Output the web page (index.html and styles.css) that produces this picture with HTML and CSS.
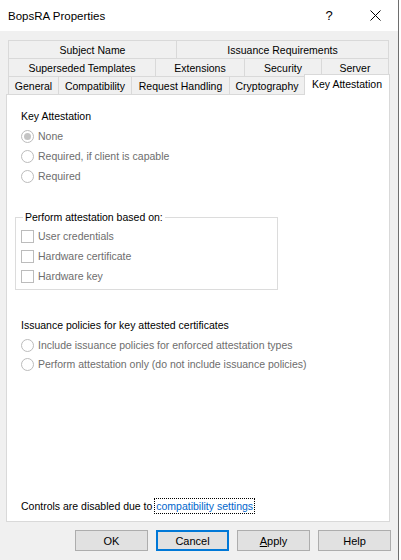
FILE: index.html
```html
<!DOCTYPE html>
<html>
<head>
<meta charset="utf-8">
<link rel="stylesheet" href="styles.css">
</head>
<body>
<div class="window">
  <div class="titlebar">
    <span class="title">BopsRA Properties</span>
    <span class="help">?</span>
    <svg class="close" width="11" height="11" viewBox="0 0 11 11"><path d="M0.5 0.5 L10.5 10.5 M10.5 0.5 L0.5 10.5" stroke="#000" stroke-width="1" fill="none"/></svg>
  </div>
  <div class="body">
    <div class="tabs">
      <div class="tabrow">
        <div class="tab w-subject">Subject Name</div>
        <div class="tab w-issuance last">Issuance Requirements</div>
      </div>
      <div class="tabrow">
        <div class="tab w-superseded">Superseded Templates</div>
        <div class="tab w-extensions">Extensions</div>
        <div class="tab w-security">Security</div>
        <div class="tab w-server last">Server</div>
      </div>
      <div class="tabrow">
        <div class="tab w-general">General</div>
        <div class="tab w-compat">Compatibility</div>
        <div class="tab w-request">Request Handling</div>
        <div class="tab w-crypto">Cryptography</div>
        <div class="tab selected w-key">Key Attestation</div>
      </div>
    </div>
    <div class="panel">
      <div class="section first">
        <div class="line label">Key Attestation</div>
        <div class="line option"><span class="radio checked"></span><span>None</span></div>
        <div class="line option"><span class="radio"></span><span>Required, if client is capable</span></div>
        <div class="line option"><span class="radio"></span><span>Required</span></div>
      </div>
      <fieldset class="group">
        <legend>Perform attestation based on:</legend>
        <div class="line option"><span class="check"></span><span>User credentials</span></div>
        <div class="line option"><span class="check"></span><span>Hardware certificate</span></div>
        <div class="line option"><span class="check"></span><span>Hardware key</span></div>
      </fieldset>
      <div class="section second">
        <div class="line label">Issuance policies for key attested certificates</div>
        <div class="line option"><span class="radio"></span><span>Include issuance policies for enforced attestation types</span></div>
        <div class="line option tight"><span class="radio"></span><span>Perform attestation only (do not include issuance policies)</span></div>
      </div>
      <div class="section footer">
        <div class="line label">Controls are disabled due to&nbsp;<a class="link">compatibility settings</a></div>
      </div>
    </div>
    <div class="buttons">
      <div class="btn">OK</div>
      <div class="btn default">Cancel</div>
      <div class="btn"><span class="ul">A</span>pply</div>
      <div class="btn">Help</div>
    </div>
  </div>
</div>
</body>
</html>
```
FILE: styles.css
```css
html, body {
  margin: 0;
  padding: 0;
  background: #ffffff;
}
body {
  width: 401px;
  height: 560px;
  overflow: hidden;
  font-family: "Liberation Sans", Arial, sans-serif;
  font-size: 10.5px;
  color: #000;
}
.window {
  width: 398px;
  height: 560px;
  border-right: 1px solid #6e6e6e;
  background: #f0f0f0;
  display: flex;
  flex-direction: column;
}
.titlebar {
  height: 31px;
  background: #ffffff;
  display: flex;
  align-items: center;
  flex-shrink: 0;
}
.title {
  margin-left: 8px;
  font-size: 11.5px;
  flex: 1;
  padding-top: 1px;
}
.help {
  font-size: 13px;
  width: 10px;
  text-align: center;
  margin-right: 36px;
}
.close {
  margin-right: 17px;
}
.body {
  padding: 9px 8px 0 7px;
  display: flex;
  flex-direction: column;
}
.tabs {
  display: flex;
  flex-direction: column;
  margin-left: 1px;
}
.tabrow {
  display: flex;
  height: 18px;
  align-items: flex-start;
}
.tab {
  box-sizing: border-box;
  height: 18px;
  border-top: 1px solid #d9d9d9;
  border-left: 1px solid #d9d9d9;
  display: flex;
  align-items: center;
  justify-content: center;
  white-space: nowrap;
  padding-top: 1px;
}
.tab.last {
  border-right: 1px solid #d9d9d9;
}
.w-subject { width: 168px; }
.w-issuance { width: 213px; }
.w-superseded { width: 147px; }
.w-extensions { width: 89px; }
.w-security { width: 77px; }
.w-server { width: 68px; }
.w-general { width: 50px; }
.w-compat { width: 73px; }
.w-request { width: 98px; }
.w-crypto { width: 75px; }
.tab.selected {
  width: 86px;
  height: 21px;
  margin-top: -2px;
  background: #ffffff;
  border-right: 1px solid #d9d9d9;
  position: relative;
  z-index: 1;
  align-items: flex-start;
  padding-top: 3px;
}
.panel {
  box-sizing: border-box;
  margin-left: -1px;
  height: 428px;
  background: #ffffff;
  border: 1px solid #d9d9d9;
  padding: 0 0 0 8px;
  display: flex;
  flex-direction: column;
}
.line {
  height: 20px;
  display: flex;
  align-items: center;
  white-space: nowrap;
}
.section {
  padding-left: 6px;
}
.section.first {
  margin-top: 11px;
}
.option {
  color: #6d6d6d;
}
.radio {
  box-sizing: border-box;
  width: 13px;
  height: 13px;
  border: 1px solid #bcbcbc;
  border-radius: 50%;
  background: #ffffff;
  margin-right: 4px;
  display: flex;
  align-items: center;
  justify-content: center;
  flex-shrink: 0;
}
.radio.checked::after {
  content: "";
  width: 7px;
  height: 7px;
  border-radius: 50%;
  background: #c4c4c4;
}
.check {
  box-sizing: border-box;
  width: 13px;
  height: 13px;
  border: 1px solid #bcbcbc;
  background: #ffffff;
  margin-right: 4px;
  flex-shrink: 0;
}
.group {
  margin: 24px 0 0 0;
  width: 263px;
  box-sizing: border-box;
  border: 1px solid #dcdcdc;
  padding: 2px 0 3px 5px;
  min-width: 0;
}
.group legend {
  padding: 0 2px;
  margin-left: 2px;
  line-height: 14px;
}
.section.second {
  margin-top: 25px;
}
.tight {
  margin-top: -1px;
}
.footer {
  margin-top: auto;
  margin-bottom: 5px;
}
.link {
  color: #0066cc;
  outline: 1px dotted #000;
  outline-offset: 0;
  padding: 1px;
}
.buttons {
  display: flex;
  justify-content: flex-end;
  gap: 8px;
  margin-top: 8px;
  margin-right: -1px;
}
.btn {
  box-sizing: border-box;
  width: 73px;
  height: 21px;
  background: #e1e1e1;
  border: 1px solid #adadad;
  display: flex;
  align-items: center;
  justify-content: center;
  font-size: 11px;
}
.btn.default {
  border: 2px solid #0078d7;
}
.ul {
  text-decoration: underline;
}
```
